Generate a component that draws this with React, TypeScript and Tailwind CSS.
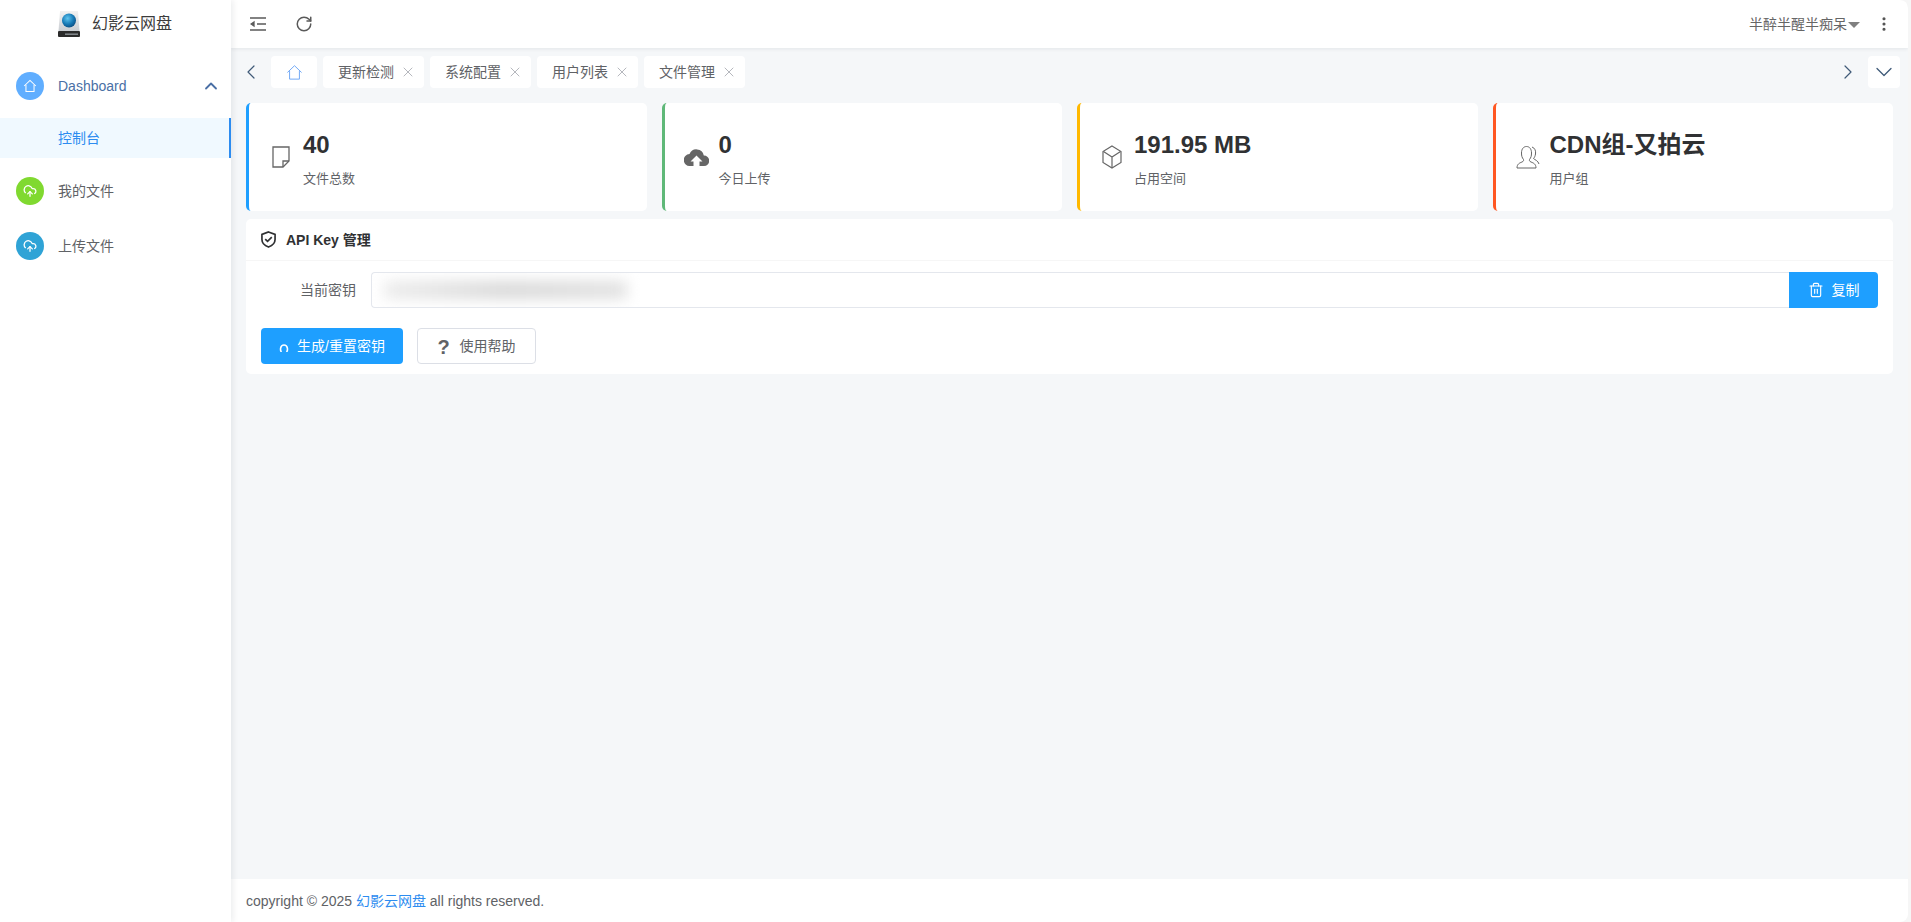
import { ChevronLeft, ChevronRight, ChevronDown, ChevronUp, CloudUpload, RotateCw, X, EllipsisVertical, Trash2 } from 'lucide-react';

const font = '[font-family:"Liberation_Sans","Noto_Sans_CJK_SC",sans-serif]';

function HomeIcon({ className, stroke = 1 }: { className?: string; stroke?: number }) {
  return (
    <svg viewBox="0 0 18 18" fill="none" stroke="currentColor" strokeWidth={stroke} className={className}>
      <path d="M1.5 9 9 1.8 16.5 9" />
      <path d="M3.8 7.5V16h10.4V7.5" />
    </svg>
  );
}

function CloudUp({ className }: { className?: string }) {
  return (
    <svg viewBox="0 0 24 18" fill="currentColor" className={className}>
      <path d="M19.3 7.4A7.5 7.5 0 0 0 5 6a6 6 0 0 0 .5 12H9v-4.500H6L12 7.500l6 6h-3V18h4.500a5.300 5.300 0 0 0-.2-10.600z" />
    </svg>
  );
}

function Logo() {
  return (
    <svg viewBox="0 0 22 26" className="w-[22px] h-[26px]">
      <defs>
        <radialGradient id="globe" cx="40%" cy="35%" r="70%">
          <stop offset="0%" stopColor="#5ec4ee" />
          <stop offset="60%" stopColor="#1679b5" />
          <stop offset="100%" stopColor="#0b4c80" />
        </radialGradient>
        <linearGradient id="disk" x1="0" y1="0" x2="0" y2="1">
          <stop offset="0%" stopColor="#f2f2f2" />
          <stop offset="100%" stopColor="#c9cdd2" />
        </linearGradient>
      </defs>
      <path d="M2 0h18l1.500 20H.5z" fill="url(#disk)" />
      <rect x="0" y="20" width="22" height="6" rx="1" fill="#2b2b2b" />
      <rect x="7" y="22.500" width="13" height="1.400" fill="#8a8f94" />
      <circle cx="11" cy="9.500" r="7" fill="url(#globe)" />
    </svg>
  );
}

function StatCard({ border, icon, value, label }: { border: string; icon: React.ReactNode; value: string; label: string }) {
  return (
    <div className={`flex-1 h-[108px] bg-white rounded-[5px] border-l-[3px] ${border} flex items-center pl-[21px]`}>
      <div className="w-[22px] h-[25px] flex items-center justify-center shrink-0">{icon}</div>
      <div className="ml-[11px] mt-[2px]">
        <div className="text-[24px] leading-[32px] font-bold text-[#303133]">{value}</div>
        <div className="text-[13px] leading-[16px] mt-[10px] text-[#606266]">{label}</div>
      </div>
    </div>
  );
}

function Tab({ label }: { label: string }) {
  return (
    <div className="h-8 w-[101px] bg-white rounded-[4px] flex items-center pl-[15px] text-[14px] text-[#606266]">
      <span>{label}</span>
      <X size={16} strokeWidth={1} className="ml-[6px] text-[#8f939b]" />
    </div>
  );
}

export default function App() {
  return (
    <div className={`h-[922px] w-[1911px] overflow-hidden flex bg-[#f6f6f6] ${font}`}>
      <aside className="w-[231px] shrink-0 bg-white relative z-10 shadow-[2px_0_6px_rgba(0,21,41,0.08)]">
        <div className="h-12 flex items-center pl-[58px] gap-[12px]">
          <Logo />
          <span className="text-[16px] text-[#3c3c3c]">幻影云网盘</span>
        </div>
        <div className="mt-[24px]">
          <div className="h-7 flex items-center pl-4 pr-[10px]">
            <span className="w-7 h-7 rounded-full bg-[#60aeff] flex items-center justify-center text-white">
              <HomeIcon className="w-[14px] h-[14px]" stroke={1.3} />
            </span>
            <span className="ml-[14px] text-[14px] text-[#4a6fa5]">Dashboard</span>
            <ChevronUp size={20} strokeWidth={2.2} className="ml-auto text-[#4a6fa5]" />
          </div>
          <div className="mt-[18px] h-10 bg-[#f0f9ff] border-r-2 border-[#2d8cf0] flex items-center pl-[58px] text-[14px] text-[#2d8cf0]">
            控制台
          </div>
          <div className="mt-[19px] h-7 flex items-center pl-4">
            <span className="w-7 h-7 rounded-full bg-[#80d930] flex items-center justify-center text-white">
              <CloudUpload size={14} strokeWidth={2.2} />
            </span>
            <span className="ml-[14px] text-[14px] text-[#606266]">我的文件</span>
          </div>
          <div className="mt-[27px] h-7 flex items-center pl-4">
            <span className="w-7 h-7 rounded-full bg-[#2fa3d6] flex items-center justify-center text-white">
              <CloudUpload size={14} strokeWidth={2.2} />
            </span>
            <span className="ml-[14px] text-[14px] text-[#606266]">上传文件</span>
          </div>
        </div>
      </aside>

      <div className="flex-1 flex flex-col min-w-0 mr-[3px] rounded-r-lg overflow-hidden">
        <header className="h-12 bg-white shadow-[0_1px_4px_rgba(0,21,41,0.08)] relative z-[5] flex items-center pl-[19px] pr-[15px] text-[#5a5a5a]">
          <svg viewBox="0 0 16 14" fill="none" stroke="currentColor" strokeWidth="1.3" className="w-4 h-[14px]">
            <path d="M0 1h16M7 7h9M0 13h16" />
            <path d="M4 5 1 7l3 2z" fill="currentColor" />
          </svg>
          <RotateCw size={18} strokeWidth={2} className="ml-[29px]" />
          <div className="ml-auto flex items-center text-[14px] text-[#666]">
            <span>半醉半醒半痴呆</span>
            <span className="ml-[1px] mt-[1px] w-0 h-0 border-x-[6px] border-x-transparent border-t-[6px] border-t-[#808080]" />
            <EllipsisVertical size={18} strokeWidth={2.2} className="ml-[15px] text-[#555]" />
          </div>
        </header>

        <main className="flex-1 bg-[#f5f7f9] px-[15px] pt-[8px]">
          <div className="flex items-center h-8 -mx-[1px]">
            <span className="w-[12px] flex justify-center">
              <ChevronLeft size={24} strokeWidth={1.2} className="shrink-0 text-[#3f5a78]" />
            </span>
            <div className="ml-[14px] w-[46px] h-8 bg-white rounded-[4px] flex items-center justify-center text-[#6aa5f5]">
              <HomeIcon className="w-[17px] h-[17px]" />
            </div>
            <div className="ml-[6px] flex gap-[6px]">
              <Tab label="更新检测" />
              <Tab label="系统配置" />
              <Tab label="用户列表" />
              <Tab label="文件管理" />
            </div>
            <ChevronRight size={24} strokeWidth={1.2} className="ml-auto text-[#3f5a78]" />
            <div className="ml-[8px] w-8 h-8 bg-white rounded-[4px] flex items-center justify-center text-[#3f5a78] -mr-[6px]">
              <ChevronDown size={28} strokeWidth={1.1} className="shrink-0" />
            </div>
          </div>

          <div className="flex gap-[15px] mt-[15px]">
            <StatCard
              border="border-[#1e9fff]"
              value="40"
              label="文件总数"
              icon={
                <svg viewBox="0 0 18 22" fill="none" stroke="#666" strokeWidth="1.3" className="w-[18px] h-[22px]">
                  <path d="M1 1h16v14l-6 6H1z" />
                  <path d="M17 15h-6v6" />
                </svg>
              }
            />
            <StatCard border="border-[#5fb878]" value="0" label="今日上传" icon={<CloudUp className="w-[25px] h-[18px] shrink-0 text-[#666]" />} />
            <StatCard
              border="border-[#ffb800]"
              value="191.95 MB"
              label="占用空间"
              icon={
                <svg viewBox="0 0 20 24" fill="none" stroke="#666" strokeWidth="1.2" className="w-5 h-6">
                  <path d="M10 1 19 6.500v11L10 23 1 17.500v-11z" />
                  <path d="M1.500 6.500 10 12l8.500-5.500M10 12v10.500" />
                </svg>
              }
            />
            <StatCard
              border="border-[#ff5722]"
              value="CDN组-又拍云"
              label="用户组"
              icon={
                <svg viewBox="0 0 24 24" fill="none" stroke="#666" strokeWidth="1" className="w-6 h-6 shrink-0">
                  <path d="M1 23c0-4 2.500-5 5-6 1.500-.6 1.800-1.500 1.500-2.500C6 12.500 5.500 11 5.500 8c0-4 2-6.500 5-6.500s5 2.500 5 6.500c0 3-.5 4.500-2 6.500-.3 1 0 1.900 1.500 2.500 2.500 1 5 2 5 6z" />
                  <path d="M16 2c3 1 4 4 3.500 7-.3 2-1 3.500-2 4.500 1.500 1.500 4.500 2 5.500 5.500" />
                </svg>
              }
            />
          </div>

          <section className="mt-2 bg-white rounded-[5px] h-[155px]">
            <div className="h-[42px] border-b border-[#f6f6f6] flex items-center pl-[15px] gap-[10px] text-[#303133]">
              <svg viewBox="0 0 16 18" fill="none" stroke="currentColor" strokeWidth="1.8" className="w-[15px] h-[17px]">
                <path d="M8 1 15 3.500V9c0 4-3 6.500-7 8-4-1.500-7-4-7-8V3.500z" />
                <path d="m4.500 8.500 2.500 2.500 4.500-4.500" />
              </svg>
              <span className="text-[14px] font-bold mt-[1px]">API Key 管理</span>
            </div>
            <div className="flex items-center mt-[11px] pl-[15px] pr-[15px]">
              <label className="w-[95px] text-right text-[14px] text-[#606266]">当前密钥</label>
              <div className="ml-[15px] flex-1 h-9 border border-[#e4e7ed] border-r-0 rounded-l-[4px] flex items-center pl-[12px] overflow-hidden">
                <div className="w-[243px] h-[18px] bg-gradient-to-r from-[#ececec] via-[#d9d9d9] to-[#e2e2e2] blur-[7px]" />
              </div>
              <button className="w-[89px] h-9 bg-[#1e9fff] rounded-r-[4px] text-white text-[14px] flex items-center justify-center gap-[8px]">
                <Trash2 size={16} strokeWidth={1.7} />
                复制
              </button>
            </div>
            <div className="flex items-center mt-[20px] pl-[15px] gap-[14px]">
              <button className="w-[142px] h-9 bg-[#1e9fff] rounded-[4px] text-white text-[14px] flex items-center justify-center gap-[8px]">
                <svg viewBox="0 0 10 8" fill="none" stroke="currentColor" strokeWidth="1.6" className="w-[10px] h-2 mt-[3px]">
                  <path d="M2.500 8C1 6.500 1 1 5 1s4 5.500 2.500 7" />
                </svg>
                生成/重置密钥
              </button>
              <button className="w-[119px] h-9 bg-white border border-[#dcdfe6] rounded-[4px] text-[#606266] text-[14px] flex items-center justify-center gap-[10px]">
                <span className="text-[20px] font-bold leading-none mt-[1px]">?</span>
                使用帮助
              </button>
            </div>
          </section>
        </main>

        <footer className="h-[43px] pt-[1px] bg-white flex items-center pl-[15px] text-[14px] text-[#606266]">
          copyright © 2025&nbsp;<span className="text-[#2d8cf0]">幻影云网盘</span>&nbsp;all rights reserved.
        </footer>
      </div>
    </div>
  );
}
